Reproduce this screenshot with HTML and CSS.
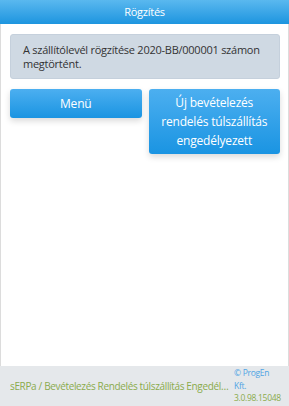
FILE: index.html
```html
<!DOCTYPE html>
<html lang="hu">
<head>
    <meta charset="UTF-8">
    <meta name="viewport" content="width=device-width, initial-scale=1.0">
    <title>Rögzítés</title>
    <link rel="stylesheet" href="styles.css">
</head>
<body>
    <div class="page">
        <div class="header">Rögzítés</div>
        <div class="content">
            <div class="message">A szállítólevél rögzítése 2020-BB/000001 számon megtörtént.</div>
            <div class="buttons">
                <button class="button">Menü</button>
                <button class="button">Új bevételezés rendelés túlszállítás engedélyezett</button>
            </div>
        </div>
        <div class="footer">
            <div class="path">sERPa / Bevételezés Rendelés túlszállítás Engedélyezett</div>
            <div class="info">
                <div class="copy">&copy; ProgEn Kft.</div>
                <div class="version">3.0.98.15048</div>
            </div>
        </div>
    </div>
</body>
</html>
```

FILE: styles.css
```css
* {
    padding: 0;
    margin: 0;
    box-sizing: border-box;
}

body {
    font-family: "Open Sans", "Noto Sans", sans-serif;
    letter-spacing: -0.25px;
    background-color: white;
}

.page {
    display: flex;
    flex-direction: column;
    height: 406px;
}

.header {
    height: 24px;
    line-height: 24px;
    text-align: center;
    color: white;
    font-size: 11px;
    background: linear-gradient(#5ab8ef, #1d95df);
}

.content {
    flex: 1;
    padding: 10px 8px 10px 9px;
    border-left: 1px solid #dcdcdc;
    border-right: 1px solid #dcdcdc;
}

.message {
    padding: 8px 12px 7px;
    font-size: 11px;
    line-height: 14px;
    color: #333;
    background-color: #cfd9e3;
    border: 1px solid #c5d0dc;
    border-radius: 3px;
}

.buttons {
    display: flex;
    gap: 7px;
    align-items: flex-start;
    margin-top: 10px;
}

.button {
    flex: 1;
    min-height: 29px;
    padding: 4px 5px;
    font-family: inherit;
    font-size: 12px;
    letter-spacing: -0.2px;
    line-height: 19px;
    color: white;
    border: none;
    border-radius: 3px;
    background: linear-gradient(#4caff0, #1a94e2);
    box-shadow: 0 3px 6px rgba(0, 0, 0, 0.15);
    cursor: pointer;
}

.footer {
    display: flex;
    align-items: center;
    height: 40px;
    padding: 0 7px 0 10px;
    font-size: 10px;
    letter-spacing: -0.35px;
    background-color: #e5e8eb;
}

.path {
    flex: 1;
    min-width: 0;
    color: #8aab4c;
    white-space: nowrap;
    overflow: hidden;
    text-overflow: ellipsis;
}

.info {
    flex: none;
    width: 48px;
    margin-left: 2px;
    font-size: 8.5px;
    letter-spacing: -0.3px;
    line-height: 12.5px;
}

.copy {
    color: #4ea4e4;
}

.version {
    color: #8aab4c;
}
```
